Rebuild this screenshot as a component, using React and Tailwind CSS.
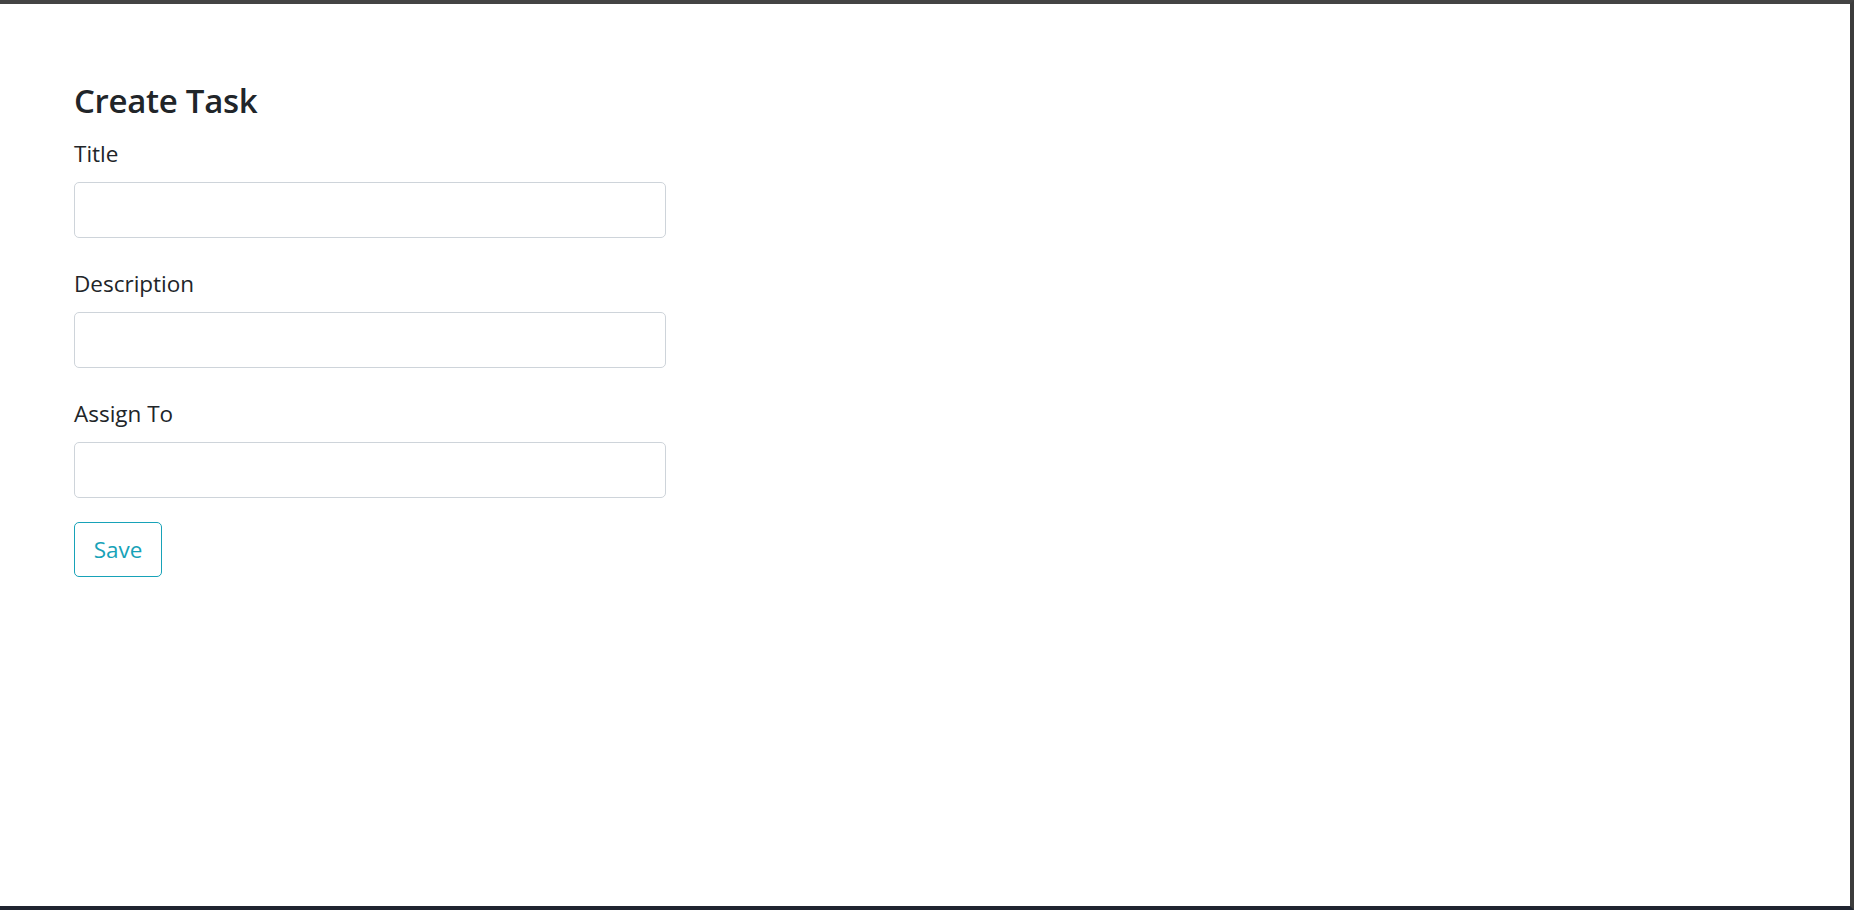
export default function App() {
  return (
    <div className="h-[910px] w-[1854px] bg-white border-t-4 border-r-4 border-b-4 border-t-[#444444] border-r-[#3c3c3c] border-b-[#1f2430] font-['Open_Sans',sans-serif] text-[#212529]">
      <div className="pl-[74px] pt-[76px] w-[666px]">
        <h3 className="text-[33px] font-semibold leading-[42px] tracking-[-0.3px]">Create Task</h3>

        <form className="mt-[17px] flex flex-col">
          <label className="text-[22.5px] leading-[30px] mb-[13px]">Title</label>
          <input className="h-[56px] w-[592px] rounded-[5px] border border-[#ced4da] px-3 outline-none" />

          <label className="text-[22.5px] leading-[30px] mt-[31px] mb-[13px]">Description</label>
          <input className="h-[56px] w-[592px] rounded-[5px] border border-[#ced4da] px-3 outline-none" />

          <label className="text-[22.5px] leading-[30px] mt-[31px] mb-[13px]">Assign To</label>
          <input className="h-[56px] w-[592px] rounded-[5px] border border-[#ced4da] px-3 outline-none" />

          <button
            type="button"
            className="mt-[24px] w-[88px] h-[55px] rounded-[5px] border border-[#17a2b8] text-[#17a2b8] text-[22.5px] flex items-center justify-center"
          >
            Save
          </button>
        </form>
      </div>
    </div>
  );
}
